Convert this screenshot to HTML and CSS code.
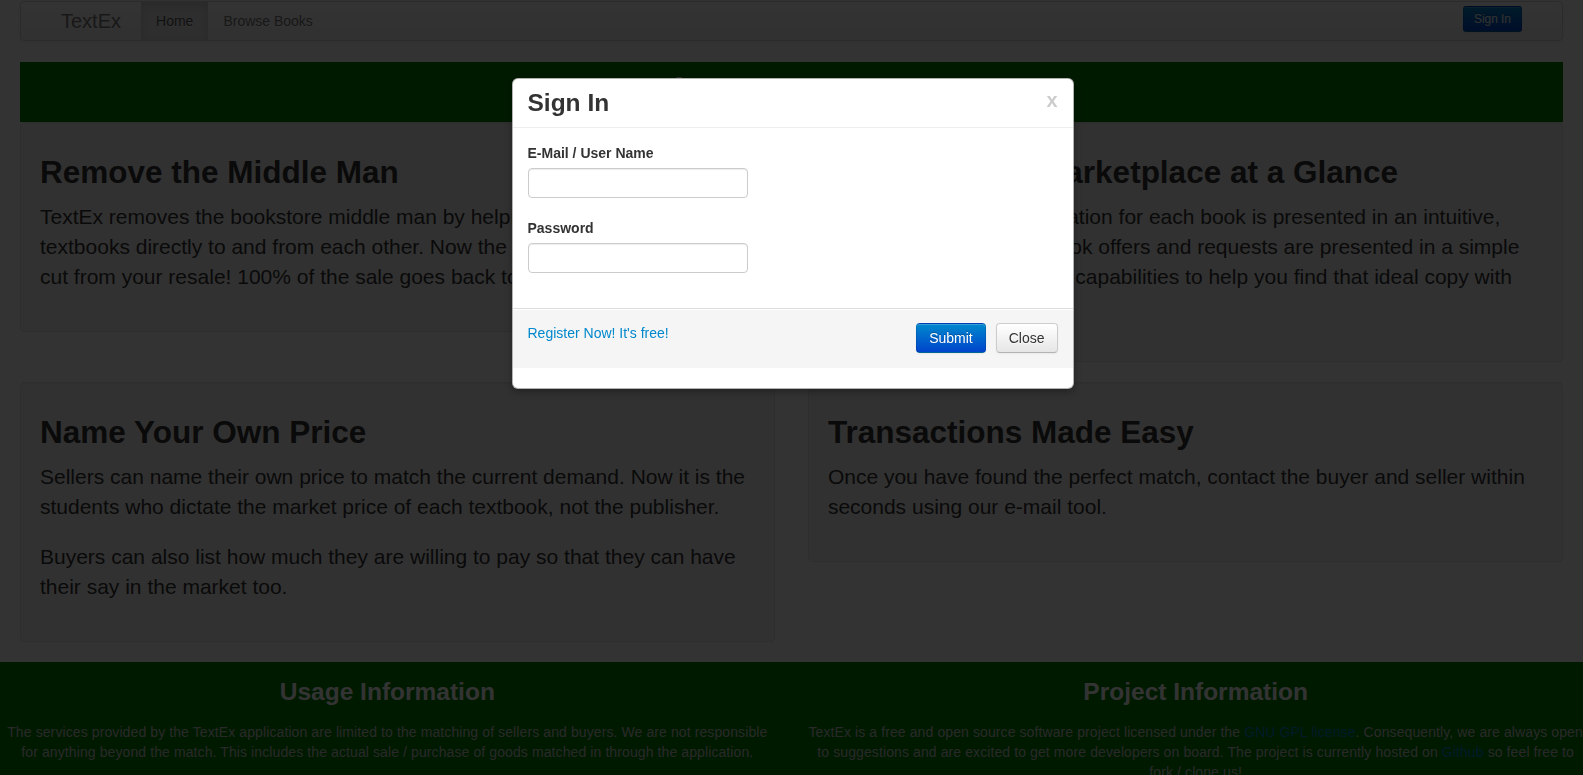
FILE: index.html
```html
<!DOCTYPE html>
<html lang="en">
<head>
<meta charset="utf-8">
<title>TextEx</title>
<link rel="stylesheet" href="styles.css">
</head>
<body>
<div class="page">
  <div class="container">
    <div class="navbar">
      <div class="navbar-inner">
        <a class="brand" href="#">TextEx</a>
        <ul class="nav">
          <li class="active"><a href="#">Home</a></li>
          <li><a href="#">Browse Books</a></li>
        </ul>
        <button class="btn btn-small btn-primary nav-signin" type="button">Sign In</button>
      </div>
    </div>

    <div class="hero">
      <h1>Welcome to TextEx</h1>
    </div>

    <div class="row">
      <div class="well">
        <h2>Remove the Middle Man</h2>
        <p class="lead">TextEx removes the bookstore middle man by helping students buy and sell textbooks directly to and from each other. Now the bookstore doesn't take a cut from your resale! 100% of the sale goes back to you.</p>
      </div>
      <div class="well">
        <h2>The Textbook Marketplace at a Glance</h2>
        <p class="lead">All of the important information for each book is presented in an intuitive, easy to use layout. Textbook offers and requests are presented in a simple format, with robust search capabilities to help you find that ideal copy with minimal effort.</p>
      </div>
    </div>

    <div class="row">
      <div class="well">
        <h2>Name Your Own Price</h2>
        <p class="lead">Sellers can name their own price to match the current demand. Now it is the students who dictate the market price of each textbook, not the publisher.</p>
        <p class="lead">Buyers can also list how much they are willing to pay so that they can have their say in the market too.</p>
      </div>
      <div class="well">
        <h2>Transactions Made Easy</h2>
        <p class="lead">Once you have found the perfect match, contact the buyer and seller within seconds using our e-mail tool.</p>
      </div>
    </div>
  </div>

  <footer class="footer">
    <div class="footer-row">
      <div class="footer-col">
        <h3>Usage Information</h3>
        <p>The services provided by the TextEx application are limited to the matching of sellers and buyers. We are not responsible for anything beyond the match. This includes the actual sale / purchase of goods matched in through the application.</p>
      </div>
      <div class="footer-col">
        <h3>Project Information</h3>
        <p>TextEx is a free and open source software project licensed under the <a href="#">GNU GPL license</a>. Consequently, we are always open to suggestions and are excited to get more developers on board. The project is currently hosted on <a href="#">Github</a> so feel free to fork / clone us!</p>
      </div>
    </div>
  </footer>
</div>

<div class="modal-backdrop"></div>

<div class="modal">
  <div class="modal-header">
    <h3>Sign In</h3>
    <button class="close" type="button">x</button>
  </div>
  <form class="modal-form">
    <div class="modal-body">
      <div class="field">
        <label for="user">E-Mail / User Name</label>
        <input id="user" type="text">
      </div>
      <div class="field">
        <label for="pass">Password</label>
        <input id="pass" type="password">
      </div>
    </div>
    <div class="modal-footer">
      <a class="register" href="#">Register Now! It's free!</a>
      <div class="actions">
        <button class="btn btn-primary" type="button">Submit</button>
        <button class="btn" type="button">Close</button>
      </div>
    </div>
  </form>
</div>
</body>
</html>
```

FILE: styles.css
```css
* {
  box-sizing: content-box;
}

html, body {
  margin: 0;
  padding: 0;
}

body {
  font-family: "Liberation Sans", Arial, Helvetica, sans-serif;
  font-size: 14px;
  line-height: 20px;
  color: #333;
  background: #fff;
  overflow: hidden;
}

a {
  color: #0088cc;
  text-decoration: none;
}

.page {
  padding-top: 1px;
}

.container {
  padding: 0 20px;
}

/* Buttons */
.btn {
  display: inline-block;
  margin: 0;
  padding: 4px 12px;
  font-family: inherit;
  font-size: 14px;
  line-height: 20px;
  color: #333;
  text-align: center;
  text-shadow: 0 1px 1px rgba(255, 255, 255, 0.75);
  background: linear-gradient(to bottom, #ffffff, #e6e6e6);
  border: 1px solid #cccccc;
  border-bottom-color: #b3b3b3;
  border-radius: 4px;
  box-shadow: inset 0 1px 0 rgba(255, 255, 255, 0.2), 0 1px 2px rgba(0, 0, 0, 0.05);
  cursor: pointer;
}

.btn-small {
  padding: 2px 10px;
  font-size: 11.9px;
  border-radius: 3px;
}

.btn-primary {
  color: #fff;
  text-shadow: 0 -1px 0 rgba(0, 0, 0, 0.25);
  background: linear-gradient(to bottom, #0088cc, #0044cc);
  border-color: rgba(0, 0, 0, 0.1) rgba(0, 0, 0, 0.1) rgba(0, 0, 0, 0.25);
}

/* Navbar */
.navbar {
  margin-bottom: 21px;
}

.navbar-inner {
  display: flex;
  align-items: flex-start;
  min-height: 38px;
  padding: 0 40px;
  background: linear-gradient(to bottom, #ffffff, #f2f2f2);
  border: 1px solid #d4d4d4;
  border-radius: 4px;
  box-shadow: 0 1px 4px rgba(0, 0, 0, 0.065);
}

.brand {
  display: block;
  margin-left: -20px;
  padding: 9px 20px;
  font-size: 20px;
  line-height: 20px;
  font-weight: 200;
  color: #777;
  text-shadow: 0 1px 0 #fff;
}

.nav {
  display: flex;
  list-style: none;
  margin: 0;
  padding: 0;
}

.nav a {
  display: block;
  padding: 9px 15px;
  color: #777;
  text-shadow: 0 1px 0 #fff;
}

.nav .active a {
  color: #555;
  background: #e5e5e5;
  box-shadow: inset 0 3px 8px rgba(0, 0, 0, 0.125);
}

.navbar-inner .nav-signin {
  margin: 4px 0 0 auto;
}

/* Hero */
.hero {
  padding: 10px 0;
  background: #008000;
  color: #fff;
  text-align: center;
}

.hero h1 {
  margin: 0;
  font-size: 38.5px;
  line-height: 40px;
  font-weight: bold;
}

/* Rows and wells */
.row {
  display: grid;
  grid-template-columns: 1fr 1fr;
  column-gap: 2.12766%;
  align-items: start;
}

.well {
  min-height: 20px;
  padding: 19px;
  margin-bottom: 20px;
  background: #f5f5f5;
  border: 1px solid #e3e3e3;
  border-radius: 4px;
  box-shadow: inset 0 1px 1px rgba(0, 0, 0, 0.05);
}

.well h2 {
  margin: 10px 0;
  font-size: 31.5px;
  line-height: 40px;
  font-weight: bold;
}

.lead {
  margin: 0 0 20px;
  font-size: 21px;
  line-height: 30px;
  font-weight: 200;
}

/* Footer */
.footer {
  background: #008000;
  color: #cccccc;
  text-align: center;
  padding-bottom: 20px;
}

.footer-row {
  display: grid;
  grid-template-columns: 1fr 1fr;
  column-gap: 2.12766%;
}

.footer h3 {
  margin: 10px 0;
  color: #fff;
  font-size: 24.5px;
  line-height: 40px;
  font-weight: bold;
}

.footer p {
  margin: 0 0 10px;
  letter-spacing: 0.1px;
}

/* Modal */
.modal-backdrop {
  position: fixed;
  inset: 0;
  background: #000;
  opacity: 0.8;
  z-index: 1040;
}

.modal {
  position: fixed;
  top: 10%;
  left: 50%;
  width: 560px;
  margin-left: -280px;
  background: #fff;
  border: 1px solid rgba(0, 0, 0, 0.3);
  border-radius: 6px;
  box-shadow: 0 3px 7px rgba(0, 0, 0, 0.3);
  z-index: 1050;
}

.modal-header {
  display: flex;
  justify-content: space-between;
  align-items: flex-start;
  padding: 9px 15px;
  border-bottom: 1px solid #eee;
}

.modal-header h3 {
  margin: 0;
  font-size: 24.5px;
  line-height: 30px;
  font-weight: bold;
}

.close {
  margin: 2px 0 0;
  padding: 0;
  border: 0;
  background: none;
  font-family: inherit;
  font-size: 20px;
  font-weight: bold;
  line-height: 20px;
  color: #000;
  opacity: 0.2;
  cursor: pointer;
}

.modal-form {
  margin: 0 0 20px;
}

.modal-body {
  padding: 15px;
}

.field {
  margin-bottom: 20px;
}

.field label {
  display: block;
  margin-bottom: 5px;
  font-weight: bold;
  font-size: 14px;
  line-height: 20px;
}

.field input {
  display: block;
  width: 206px;
  height: 20px;
  margin: 0;
  padding: 4px 6px;
  font-family: inherit;
  font-size: 14px;
  line-height: 20px;
  color: #555;
  background: #fff;
  border: 1px solid #ccc;
  border-radius: 4px;
  box-shadow: inset 0 1px 1px rgba(0, 0, 0, 0.075);
}

.modal-footer {
  display: flex;
  justify-content: space-between;
  align-items: flex-start;
  padding: 14px 15px 15px;
  background: #f5f5f5;
  border-top: 1px solid #ddd;
  box-shadow: inset 0 1px 0 #fff;
}

.actions {
  display: flex;
  gap: 10px;
}
```
